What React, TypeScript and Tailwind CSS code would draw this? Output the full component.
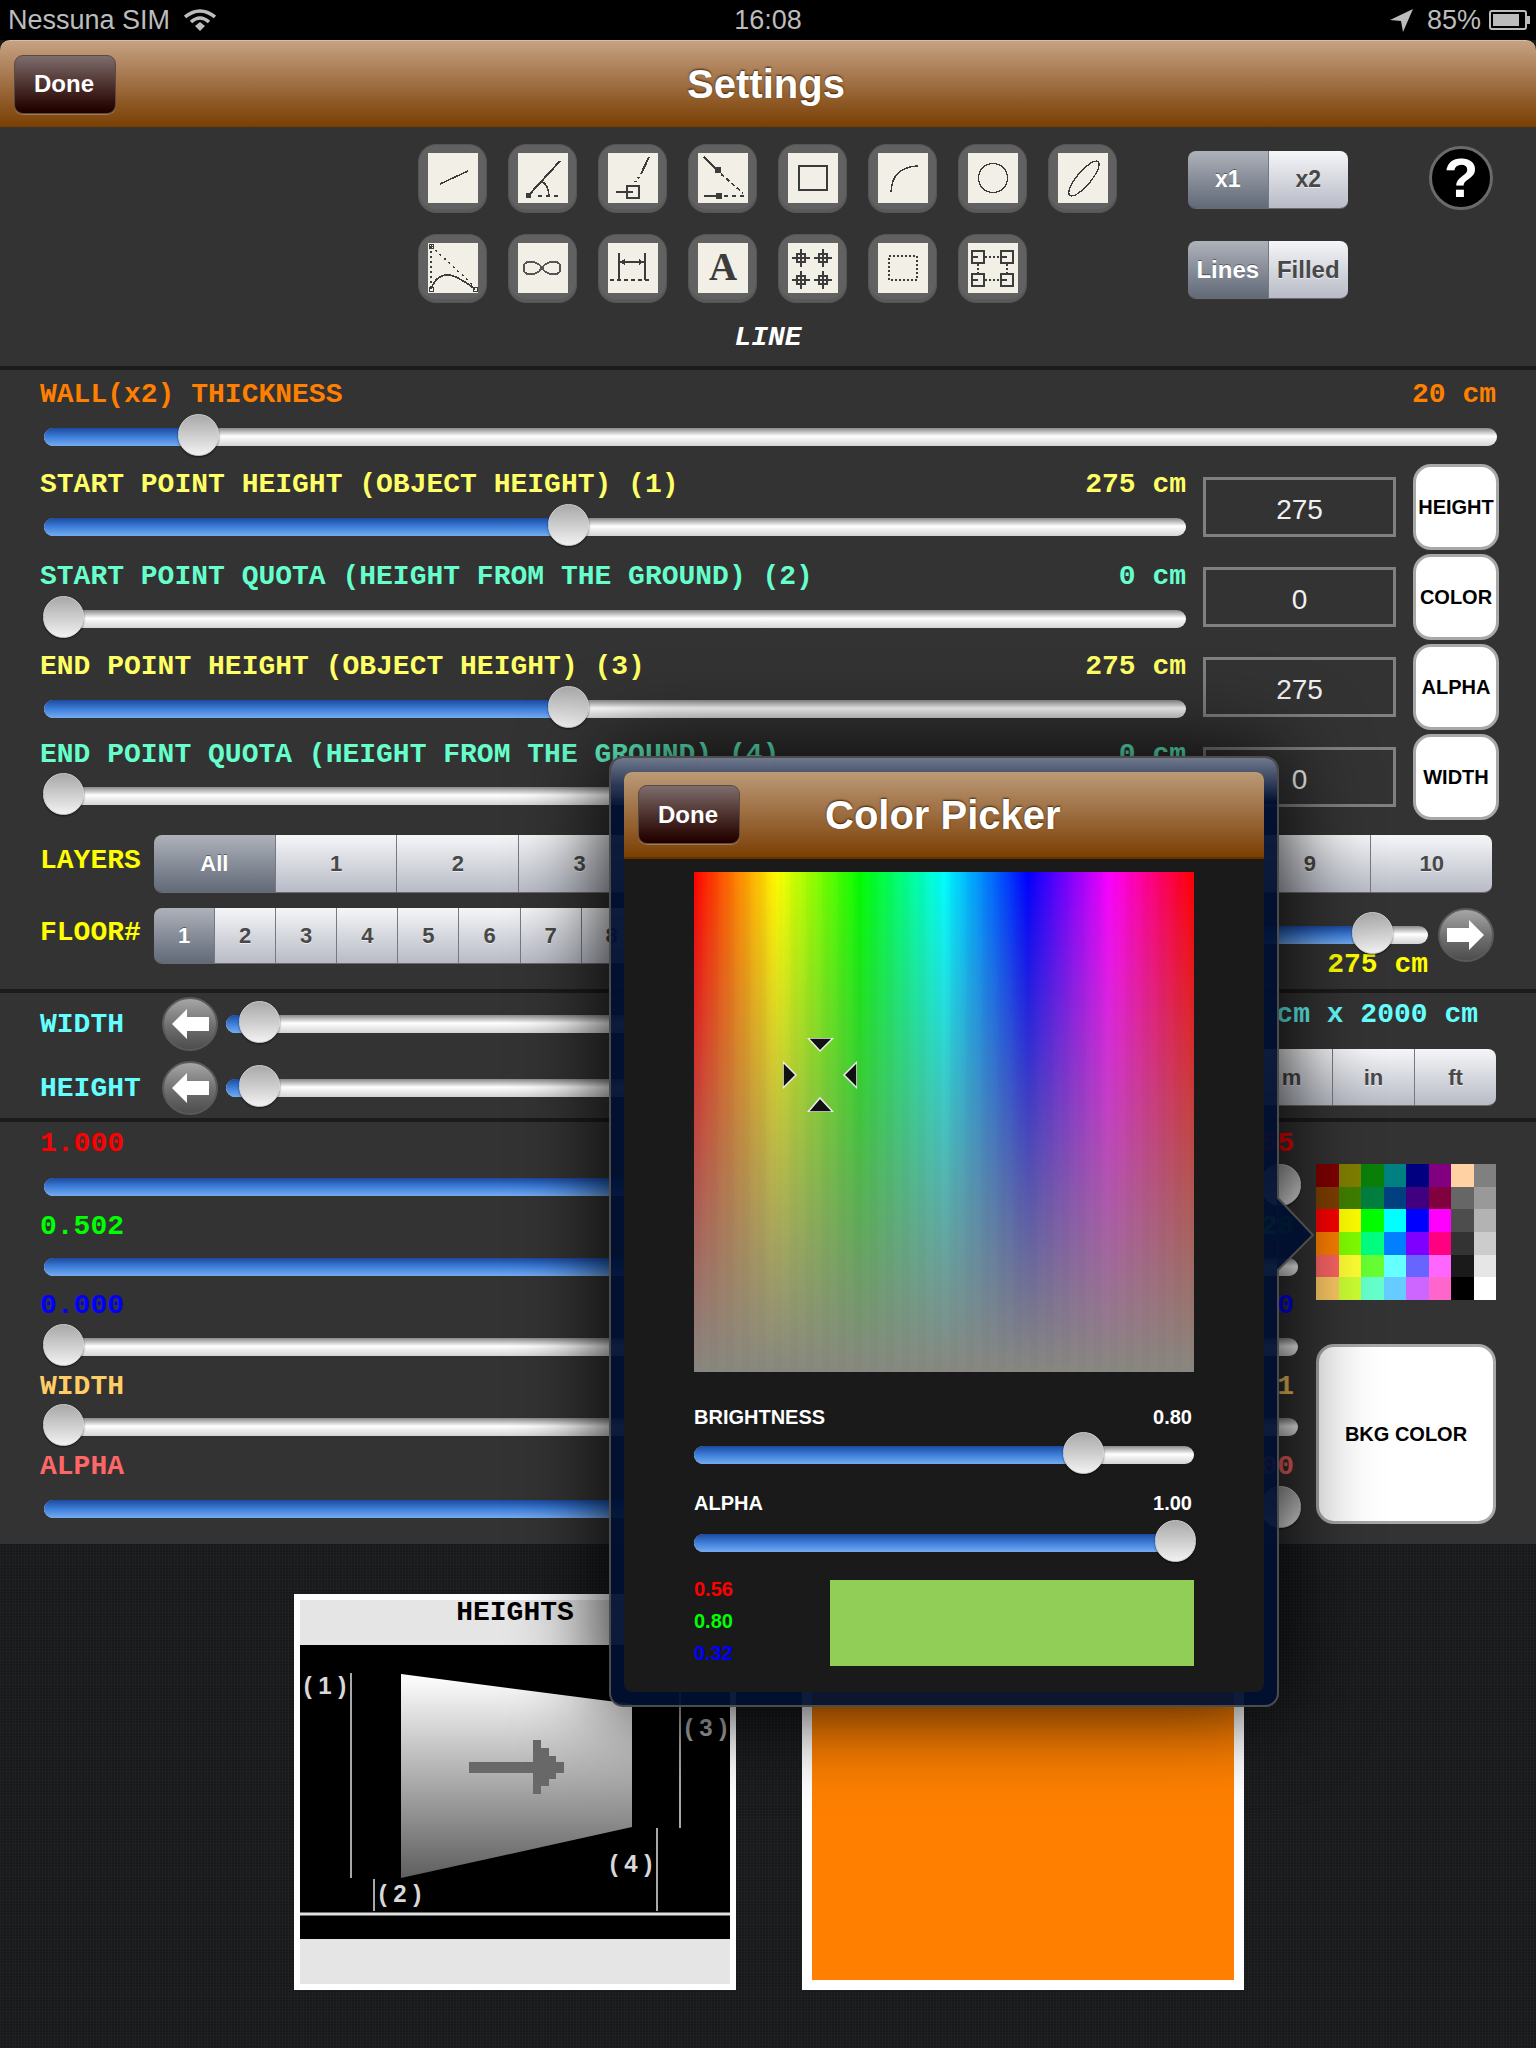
import type { ReactNode } from 'react';

const SANS = "font-['Liberation_Sans',Arial,sans-serif]";
const MONO = "font-['Liberation_Mono','Courier_New',monospace]";

const INK = '#3c3c3c';

const toolIcons: ReactNode[] = [
  <line key="a" x1="12" y1="31" x2="40" y2="18" stroke={INK} strokeWidth="1.5" />,
  <g key="b" stroke={INK} fill="none">
    <line x1="42" y1="8" x2="10" y2="43" strokeWidth="2" />
    <rect x="8" y="40" width="5" height="5" fill={INK} stroke="none" />
    <line x1="20" y1="43" x2="42" y2="43" strokeWidth="1.5" strokeDasharray="4 4" />
    <path d="M22 29 Q29 28 31 42" strokeWidth="1.5" />
  </g>,
  <g key="c" stroke={INK} fill="none" strokeWidth="1.7">
    <line x1="41" y1="4" x2="33" y2="21" strokeWidth="2" />
    <line x1="31" y1="24" x2="27" y2="29" strokeWidth="2" strokeDasharray="2 3" />
    <rect x="19" y="33" width="12" height="12" />
    <line x1="8" y1="39" x2="25" y2="39" />
  </g>,
  <g key="d" stroke={INK} fill="none">
    <line x1="6" y1="4" x2="20" y2="18" strokeWidth="2.5" />
    <rect x="17" y="14" width="6" height="6" fill={INK} stroke="none" />
    <line x1="23" y1="21" x2="45" y2="40" strokeWidth="1.7" strokeDasharray="4 3" />
    <line x1="6" y1="43" x2="22" y2="43" strokeWidth="1.7" />
    <rect x="18" y="40" width="6" height="6" fill={INK} stroke="none" />
    <line x1="26" y1="43" x2="46" y2="43" strokeWidth="1.7" strokeDasharray="4 4" />
  </g>,
  <rect key="e" x="11" y="13" width="28" height="24" fill="none" stroke={INK} strokeWidth="1.7" />,
  <path key="f" d="M13 39 Q14 14 40 13" fill="none" stroke={INK} strokeWidth="1.5" />,
  <circle key="g" cx="25" cy="25" r="14.5" fill="none" stroke={INK} strokeWidth="1.3" />,
  <ellipse key="h" cx="26" cy="25.5" rx="22" ry="7" transform="rotate(-50 26 25.5)" fill="none" stroke={INK} strokeWidth="1.3" />,
  <g key="i" stroke={INK} fill="none">
    <line x1="3" y1="3" x2="3" y2="44" strokeWidth="1.5" strokeDasharray="2 3" />
    <line x1="3" y1="3" x2="47" y2="44" strokeWidth="1.5" strokeDasharray="2 4" />
    <path d="M3 46 Q8 32 20 32 Q28 32 47 46" strokeWidth="1.7" />
    <rect x="1" y="1" width="4" height="4" />
    <rect x="1" y="44" width="4" height="4" />
    <rect x="45" y="44" width="4" height="4" />
  </g>,
  <path
    key="j"
    d="M24 25 C20 19 14 18 10 19 C4 20 4 30 10 31 C14 32 20 31 24 25 C28 19 34 18 38 19 C44 20 44 30 38 31 C34 32 28 31 24 25 Z"
    stroke="#555"
    fill="none"
    strokeWidth="2"
  />,
  <g key="k" stroke={INK} fill="none" strokeWidth="1.7">
    <line x1="11" y1="10" x2="11" y2="37" />
    <line x1="37" y1="10" x2="37" y2="37" />
    <line x1="11" y1="19" x2="37" y2="19" />
    <path d="M12 19 L17 16 V22 Z M36 19 L31 16 V22 Z" fill={INK} stroke="none" />
    <line x1="2" y1="37" x2="44" y2="37" strokeDasharray="4 3" />
  </g>,
  <text key="l" x="25" y="37" textAnchor="middle" fontFamily="Liberation Serif" fontWeight="700" fontSize="39" fill={INK}>
    A
  </text>,
  <g key="m" stroke={INK} fill="none" strokeWidth="1.7">
    {[
      [13, 15],
      [35, 15],
      [13, 37],
      [35, 37],
    ].map(([x, y]) => (
      <g key={`${x}-${y}`}>
        <line x1={x - 9} y1={y} x2={x + 9} y2={y} />
        <line x1={x} y1={y - 9} x2={x} y2={y + 9} />
        <rect x={x - 4} y={y - 4} width="8" height="8" />
      </g>
    ))}
  </g>,
  <rect key="n" x="11" y="13" width="28" height="24" fill="none" stroke={INK} strokeWidth="2" strokeDasharray="2 2" />,
  <g key="o" stroke={INK} fill="none" strokeWidth="1.7">
    {[
      [4, 8],
      [33, 8],
      [4, 31],
      [33, 31],
    ].map(([x, y]) => (
      <g key={`${x}-${y}`}>
        <rect x={x} y={y} width="12" height="12" />
        <line x1={x + 1} y1={y + 6} x2={x + 6} y2={y + 6} />
      </g>
    ))}
    <line x1="17" y1="14" x2="32" y2="14" strokeDasharray="2 2" />
    <line x1="17" y1="37" x2="32" y2="37" strokeDasharray="2 2" />
    <line x1="10" y1="21" x2="10" y2="30" strokeDasharray="2 2" />
    <line x1="39" y1="21" x2="39" y2="30" strokeDasharray="2 2" />
  </g>,
];

const swatches = [
  ['#800000', '#808000', '#0a800a', '#008080', '#000080', '#800080', '#ffd1a3', '#808080'],
  ['#804000', '#408000', '#008040', '#004080', '#400080', '#800040', '#666666', '#999999'],
  ['#ff0000', '#ffff00', '#00ff00', '#00ffff', '#0000ff', '#ff00ff', '#4d4d4d', '#b3b3b3'],
  ['#ff8000', '#80ff00', '#00ff80', '#0080ff', '#8000ff', '#ff0080', '#333333', '#cccccc'],
  ['#ff6666', '#ffff33', '#66ff33', '#66ffff', '#6666ff', '#ff66ff', '#1a1a1a', '#e6e6e6'],
  ['#ffcc66', '#ccff33', '#66ffcc', '#66ccff', '#cc66ff', '#ff66cc', '#000000', '#ffffff'],
];

function ToolTile({ children }: { children: ReactNode }) {
  return (
    <div className="w-[69px] h-[69px] rounded-[18px] bg-[#616161] border border-[#555] shadow-[inset_0_-3px_0_#5a5a5a] flex items-center justify-center pb-[1px]">
      <svg viewBox="0 0 50 50" className="w-[50px] h-[50px] bg-[#f2f0e6]" shapeRendering="crispEdges">
        {children}
      </svg>
    </div>
  );
}

function Slider({ width, thumb, fill = 0 }: { width: number; thumb: number; fill?: number }) {
  return (
    <div className="relative h-[42px]" style={{ width }}>
      <div className="absolute inset-x-0 top-[12px] h-[18px] rounded-full overflow-hidden bg-gradient-to-b from-[#8a8a8a] via-[#ffffff] via-45% to-[#d4d4d4]">
        {fill > 0 && (
          <div
            className="h-full bg-gradient-to-b from-[#1c4a9e] via-[#3f7fda] via-50% to-[#74abf0]"
            style={{ width: fill }}
          />
        )}
      </div>
      <div
        className="absolute top-[-2px] w-[41px] h-[42px] rounded-full bg-gradient-to-b from-[#a9a9a9] to-[#f2f2f2] border border-[#d0d0d0] shadow-[0_1px_2px_rgba(0,0,0,0.6)]"
        style={{ left: thumb - 20 }}
      />
    </div>
  );
}

function Segmented({
  items,
  selected = 0,
  className,
}: {
  items: string[];
  selected?: number;
  className: string;
}) {
  return (
    <div className={`flex rounded-[8px] overflow-hidden border-b border-[#6b6b6b] shrink-0 font-bold ${className}`}>
      {items.map((item, i) => (
        <div
          key={item}
          className={
            i === selected
              ? 'flex-1 flex items-center justify-center bg-gradient-to-b from-[#aeb2ba] to-[#626a78] text-white [text-shadow:0_-1px_0_rgba(0,0,0,0.4)]'
              : 'flex-1 flex items-center justify-center bg-gradient-to-b from-[#f5f6f8] to-[#b8bbc6] text-[#484848] border-l border-[#77797e] [text-shadow:0_1px_0_rgba(255,255,255,0.6)]'
          }
        >
          {item}
        </div>
      ))}
    </div>
  );
}

function Label({ text, value, color }: { text: string; value?: string; color: string }) {
  return (
    <div className={`flex justify-between h-8 leading-[34px] text-[28px] font-bold whitespace-pre ${MONO} ${color}`}>
      <span>{text}</span>
      {value && <span>{value}</span>}
    </div>
  );
}

function ArrowButton({ dir }: { dir: 'left' | 'right' }) {
  return (
    <svg viewBox="0 0 56 54" className="w-[56px] h-[54px] shrink-0">
      <defs>
        <linearGradient id={`arrow-${dir}`} x1="0" y1="0" x2="0" y2="1">
          <stop offset="0" stopColor="#a8a8a8" />
          <stop offset="0.55" stopColor="#6e6e6e" />
          <stop offset="1" stopColor="#4c4c4c" />
        </linearGradient>
      </defs>
      <ellipse cx="28" cy="27" rx="27" ry="26" fill={`url(#arrow-${dir})`} stroke="#5a5a5a" strokeWidth="2" />
      <polygon
        points="10,27 25,12 25,20 47,20 47,34 25,34 25,42"
        fill="#ffffff"
        transform={dir === 'right' ? 'rotate(180 28 27)' : undefined}
      />
    </svg>
  );
}

function DoneButton() {
  return (
    <div className="w-[102px] h-[59px] rounded-[9px] border border-[#5b4a3f] bg-gradient-to-b from-[#7d6d6d] to-[#1e0000] flex items-center justify-center pr-[2px] text-white font-bold text-[24px] shadow-[0_1px_0_rgba(255,255,255,0.25)]">
      Done
    </div>
  );
}

function SideButton({ text }: { text: string }) {
  return (
    <div className="w-[86px] h-[86px] rounded-[18px] bg-white border-[3px] border-[#a8a8a8] flex items-center justify-center text-black font-bold text-[20px]">
      {text}
    </div>
  );
}

function ValueBox({ text }: { text: string }) {
  return (
    <div className="w-[193px] h-[60px] border-[3px] border-[#808080] flex items-center justify-center pt-[6px] text-[#f0f0f0] text-[28px]">
      {text}
    </div>
  );
}

function Divider() {
  return <div className="h-1 bg-[#1b1b1b]" />;
}

function StatusBar() {
  return (
    <div className="h-10 bg-black grid grid-cols-3 items-center text-[27px] text-[#bcbcbc]">
      <div className="flex items-center pl-2 gap-[14px]">
        <span>Nessuna SIM</span>
        <svg viewBox="0 0 32 22" className="w-8 h-[22px]">
          <path d="M1 8 Q16 -4 31 8" fill="none" stroke="#bcbcbc" strokeWidth="3.5" />
          <path d="M7 13 Q16 5 25 13" fill="none" stroke="#bcbcbc" strokeWidth="3.5" />
          <polygon points="16,22 11,17 16,13 21,17" fill="#bcbcbc" />
        </svg>
      </div>
      <div className="text-center">16:08</div>
      <div className="flex items-center justify-end pr-[6px]">
        <svg viewBox="0 0 23 23" className="w-[23px] h-[23px] mr-[14px]">
          <polygon points="0,11 23,0 13,23 11,12" fill="#bcbcbc" />
        </svg>
        <span className="mr-[8px]">85%</span>
        <div className="w-[38px] h-[20px] border-2 border-[#bcbcbc] rounded-[3px] p-[2px]">
          <div className="h-full w-[85%] bg-[#bcbcbc]" />
        </div>
        <div className="w-[3px] h-[8px] bg-[#bcbcbc]" />
      </div>
    </div>
  );
}

function NavBar() {
  return (
    <div className="h-[87px] rounded-t-[10px] border-t border-[#d8bda4] bg-gradient-to-b from-[#c6a283] via-[#8f5a26] via-70% to-[#7a3f00] grid grid-cols-[1fr_auto_1fr] items-center px-[14px]">
      <DoneButton />
      <div className="text-white font-bold text-[40px] pr-1 [text-shadow:0_-1px_2px_rgba(50,25,0,0.9)]">Settings</div>
      <div />
    </div>
  );
}

function ToolSection() {
  return (
    <div className="h-[239px] bg-[#333333] pt-[17px]">
      <div className="flex pl-[418px]">
        <div className="grid grid-cols-8 gap-[21px] w-[699px]">
          {toolIcons.map((icon, i) => (
            <ToolTile key={i}>{icon}</ToolTile>
          ))}
        </div>
        <div className="flex flex-col gap-[32px] pt-[7px] ml-[71px]">
          <Segmented items={['x1', 'x2']} className="w-[160px] h-[58px] text-[23px]" />
          <Segmented items={['Lines', 'Filled']} className="w-[160px] h-[58px] text-[24px]" />
        </div>
        <div className="ml-[81px] mt-[2px] w-16 h-16 rounded-full bg-black border-[3px] border-[#6a6a6a] flex items-center justify-center text-white font-bold text-[56px] leading-none">
          ?
        </div>
      </div>
      <div className={`mt-[19px] text-center text-white italic font-bold text-[28px] leading-8 ${MONO}`}>LINE</div>
    </div>
  );
}

function ParamSection() {
  return (
    <div className="h-[619px] bg-[#333333] pl-[40px] pt-[8px]">
      <div className="w-[1456px]">
        <Label text="WALL(x2) THICKNESS" value="20 cm" color="text-[#ff8000]" />
      </div>
      <div className="mt-[6px] ml-[4px]">
        <Slider width={1453} thumb={154} fill={154} />
      </div>

      <div className="flex h-[362px]">
        <div className="w-[1146px] shrink-0">
          <div className="mt-[10px]">
            <Label text="START POINT HEIGHT (OBJECT HEIGHT) (1)" value="275 cm" color="text-[#ffff66]" />
          </div>
          <div className="mt-[6px] ml-[4px]">
            <Slider width={1142} thumb={524} fill={524} />
          </div>
          <div className="mt-[12px]">
            <Label text="START POINT QUOTA (HEIGHT FROM THE GROUND) (2)" value="0 cm" color="text-[#66ffcc]" />
          </div>
          <div className="mt-[6px] ml-[4px]">
            <Slider width={1142} thumb={19} />
          </div>
          <div className="mt-[10px]">
            <Label text="END POINT HEIGHT (OBJECT HEIGHT) (3)" value="275 cm" color="text-[#ffff66]" />
          </div>
          <div className="mt-[6px] ml-[4px]">
            <Slider width={1142} thumb={524} fill={524} />
          </div>
          <div className="mt-[8px]">
            <Label text="END POINT QUOTA (HEIGHT FROM THE GROUND) (4)" value="0 cm" color="text-[#66ffcc]" />
          </div>
          <div className="mt-[5px] ml-[4px]">
            <Slider width={1142} thumb={19} />
          </div>
        </div>
        <div className="ml-[17px] pt-[19px] flex flex-col gap-[30px]">
          <ValueBox text="275" />
          <ValueBox text="0" />
          <ValueBox text="275" />
          <ValueBox text="0" />
        </div>
        <div className="ml-[17px] pt-[6px] flex flex-col gap-1">
          <SideButton text="HEIGHT" />
          <SideButton text="COLOR" />
          <SideButton text="ALPHA" />
          <SideButton text="WIDTH" />
        </div>
      </div>

      <div className="flex items-center mt-[15px] h-[58px]">
        <div className="w-[114px] -mt-2">
          <Label text="LAYERS" color="text-[#ffff00]" />
        </div>
        <Segmented items={['All', '1', '2', '3', '4', '5', '6', '7', '8', '9', '10']} className="w-[1338px] h-[58px] text-[22px]" />
      </div>

      <div className="flex items-start mt-[15px] h-[56px]">
        <div className="w-[114px] mt-[8px]">
          <Label text="FLOOR#" color="text-[#ffff00]" />
        </div>
        <Segmented items={['1', '2', '3', '4', '5', '6', '7', '8', '9', '10', '11']} className="w-[671px] h-[56px] text-[22px]" />
        <div className="ml-[75px] mt-[6px]">
          <Slider width={528} thumb={472} fill={472} />
          <div className="-mt-2 text-right">
            <Label text="" value="275 cm" color="text-[#ffff00]" />
          </div>
        </div>
        <div className="ml-[10px]">
          <ArrowButton dir="right" />
        </div>
      </div>
    </div>
  );
}

function SizeSection() {
  return (
    <div className="h-[125px] bg-[#333333] flex justify-between pl-[40px] pr-[40px] pt-1">
      <div className="flex flex-col gap-[10px]">
        {['WIDTH', 'HEIGHT'].map((name) => (
          <div key={name} className="flex items-center h-[54px]">
            <div className="w-[122px]">
              <Label text={name} color="text-[#66ffff]" />
            </div>
            <ArrowButton dir="left" />
            <div className="ml-[8px]">
              <Slider width={674} thumb={33} fill={33} />
            </div>
          </div>
        ))}
      </div>
      <div className="flex flex-col items-end pt-[1px]">
        <div className="mr-[18px]">
          <Label text="2000 cm x 2000 cm" color="text-[#66ffff]" />
        </div>
        <div className="mt-[19px]">
          <Segmented items={['cm', 'm', 'in', 'ft']} selected={-1} className="w-[328px] h-[57px] text-[22px]" />
        </div>
      </div>
    </div>
  );
}

function ColorSection() {
  return (
    <div className="h-[422px] bg-[#333333] flex pl-[40px] pt-[5px]">
      <div className="w-[1254px] shrink-0">
        <Label text="1.000" value="255" color="text-[#ff0000]" />
        <div className="mt-[7px] ml-[4px]">
          <Slider width={1254} thumb={1236} fill={1236} />
        </div>
        <div className="mt-[2px]">
          <Label text="0.502" value="128" color="text-[#00ff00]" />
        </div>
        <div className="mt-[4px] ml-[4px]">
          <Slider width={1254} thumb={630} fill={630} />
        </div>
        <div className="mt-[1px]">
          <Label text="0.000" value="0" color="text-[#0000ff]" />
        </div>
        <div className="mt-[5px] ml-[4px]">
          <Slider width={1254} thumb={19} />
        </div>
        <div className="mt-[2px]">
          <Label text="WIDTH" value="1" color="text-[#ffcc66]" />
        </div>
        <div className="mt-[4px] ml-[4px]">
          <Slider width={1254} thumb={19} />
        </div>
        <div className="mt-[2px]">
          <Label text="ALPHA" value="100" color="text-[#ff6666]" />
        </div>
        <div className="mt-[6px] ml-[4px]">
          <Slider width={1254} thumb={1236} fill={1236} />
        </div>
      </div>
      <div className="ml-[22px] pt-[37px]">
        <div className="grid grid-cols-8 w-[180px] h-[136px]">
          {swatches.flat().map((color, i) => (
            <div key={i} style={{ backgroundColor: color }} />
          ))}
        </div>
        <div className="mt-[44px] w-[180px] h-[180px] rounded-[18px] bg-white border-[3px] border-[#a8a8a8] flex items-center justify-center text-black font-bold text-[20px]">
          BKG COLOR
        </div>
      </div>
    </div>
  );
}

function HeightsCard() {
  return (
    <div className="w-[442px] h-[396px] border-[6px] border-white bg-[#e5e5e5] flex flex-col">
      <div className={`h-[45px] pt-[1px] text-center text-black font-bold text-[28px] leading-6 ${MONO}`}>HEIGHTS</div>
      <svg viewBox="0 0 430 294" className="w-[430px] h-[294px] bg-black">
        <defs>
          <linearGradient id="wall" x1="0" y1="0" x2="0" y2="1">
            <stop offset="0" stopColor="#ffffff" />
            <stop offset="1" stopColor="#5f5f5f" />
          </linearGradient>
        </defs>
        <polygon points="101,29 332,59 332,182 101,233" fill="url(#wall)" />
        <g fill="#696969">
          <rect x="169" y="117" width="64" height="11" />
          <rect x="233" y="95" width="8" height="54" />
          <rect x="241" y="103" width="8" height="38" />
          <rect x="248" y="111" width="8" height="23" />
          <rect x="256" y="117" width="8" height="11" />
        </g>
        <g stroke="#e0e0e0" strokeWidth="1.5">
          <line x1="51" y1="28" x2="51" y2="233" />
          <line x1="74" y1="234" x2="74" y2="266" />
          <line x1="357" y1="183" x2="357" y2="266" />
          <line x1="380" y1="29" x2="380" y2="183" />
          <line x1="0" y1="269" x2="430" y2="269" strokeWidth="3" />
        </g>
        <g fontFamily="Liberation Sans" fontWeight="700" fontSize="24" textAnchor="middle" fill="#d8d8d8">
          <text x="25" y="49">( 1 )</text>
          <text x="100" y="257">( 2 )</text>
          <text x="406" y="91" fill="#a8a8a8">( 3 )</text>
          <text x="331" y="227">( 4 )</text>
        </g>
      </svg>
    </div>
  );
}

function ColorPicker() {
  return (
    <>
      <div className="absolute left-[609px] top-[756px] w-[670px] h-[951px] rounded-[14px] border-2 border-[#4c4c4c] bg-[#001030]/95 pt-[14px] px-[13px] pb-[13px] shadow-[0_0_90px_rgba(0,0,0,0.95)]">
        <div className="absolute inset-x-0 top-0 h-[44px] rounded-t-[12px] bg-gradient-to-b from-[#6f788e] to-transparent" />
        <div className="relative h-full rounded-[8px] bg-[#1a1a1a] overflow-hidden">
          <div className="h-[87px] bg-gradient-to-b from-[#bb9a77] via-[#8f5a26] via-70% to-[#7a3f00] border-b-2 border-[#663300] flex items-center pl-[14px]">
            <DoneButton />
            <div className="ml-[85px] text-white font-bold text-[40px] [text-shadow:0_-1px_2px_rgba(50,25,0,0.9)]">
              Color Picker
            </div>
          </div>

          <div className="pl-[70px] w-[570px]">
            <div className="relative mt-[13px] w-[500px] h-[500px] bg-[repeating-linear-gradient(90deg,rgba(0,0,0,0.015)_0px,rgba(0,0,0,0.015)_8px,transparent_8px,transparent_16px),linear-gradient(to_bottom,rgba(136,136,128,0),rgba(136,136,128,1)),linear-gradient(to_right,#ff0000,#ffff00_16.7%,#00ff00_33.3%,#00ffff_50%,#0000ff_66.7%,#ff00ff_83.3%,#ff0000)]">
              <svg viewBox="0 0 74 74" className="absolute left-[89px] top-[166px] w-[74px] h-[74px]">
                <g fill="#111" stroke="#eee" strokeWidth="1.5">
                  <polygon points="25,0 50,0 37,13" />
                  <polygon points="25,74 50,74 37,60" />
                  <polygon points="0,24 13,37 0,50" />
                  <polygon points="74,24 61,37 74,50" />
                </g>
              </svg>
            </div>

            <div className="mt-[33px] flex justify-between pr-[2px] h-6 leading-6 text-[20px] text-white font-bold">
              <span>BRIGHTNESS</span>
              <span>0.80</span>
            </div>
            <div className="mt-[5px]">
              <Slider width={500} thumb={389} fill={389} />
            </div>
            <div className="mt-[15px] flex justify-between pr-[2px] h-6 leading-6 text-[20px] text-white font-bold">
              <span>ALPHA</span>
              <span>1.00</span>
            </div>
            <div className="mt-[7px]">
              <Slider width={500} thumb={481} fill={481} />
            </div>

            <div className="mt-[16px] flex justify-between">
              <div className="-mt-[3px] flex flex-col gap-2 text-[20px] leading-6 font-bold">
                <span className="text-[#ff0000]">0.56</span>
                <span className="text-[#00ff00]">0.80</span>
                <span className="text-[#0000ff]">0.32</span>
              </div>
              <div className="w-[364px] h-[86px] bg-[#90ce58]" />
            </div>
          </div>
        </div>
      </div>
      <svg viewBox="0 0 38 76" className="absolute left-[1277px] top-[1197px] w-[38px] h-[76px]">
        <polygon points="0,0 36,38 0,74" fill="#001030" fillOpacity="0.95" />
        <polyline points="0,0 36,38 0,74" fill="none" stroke="#4c4c4c" strokeWidth="2" />
      </svg>
    </>
  );
}

export default function App() {
  return (
    <div className={`relative w-[1536px] h-[2048px] overflow-hidden bg-[#17191b] ${SANS}`}>
      <StatusBar />
      <NavBar />
      <ToolSection />
      <Divider />
      <ParamSection />
      <Divider />
      <SizeSection />
      <Divider />
      <ColorSection />
      <div className="h-[504px] flex pl-[294px] pt-[50px] gap-[66px] bg-[repeating-linear-gradient(90deg,rgba(255,255,255,0.025)_0px,rgba(255,255,255,0.025)_1px,transparent_1px,transparent_3px),repeating-linear-gradient(0deg,rgba(255,255,255,0.02)_0px,rgba(255,255,255,0.02)_1px,transparent_1px,transparent_3px)]">
        <HeightsCard />
        <div className="w-[442px] h-[396px] border-[10px] border-white bg-[#ff8000]" />
      </div>
      <ColorPicker />
    </div>
  );
}
